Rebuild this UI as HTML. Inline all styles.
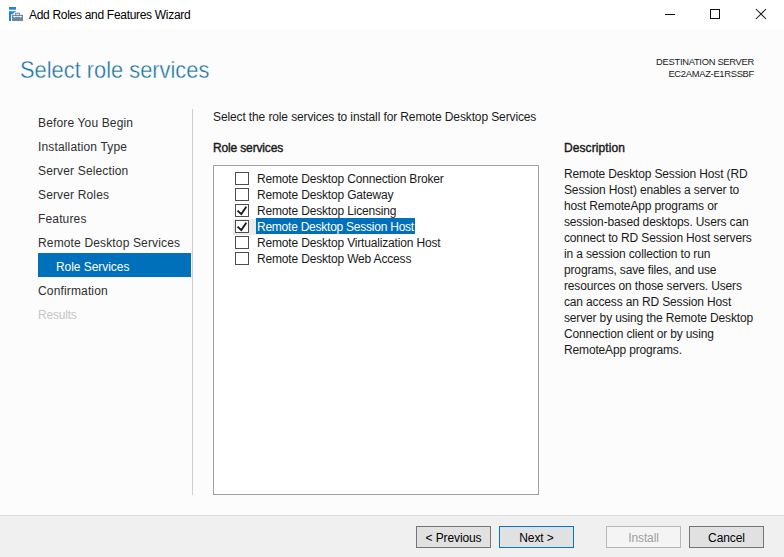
<!DOCTYPE html>
<html><head><meta charset="utf-8">
<style>
html,body{margin:0;padding:0;}
body{width:784px;height:557px;position:relative;overflow:hidden;background:#fcfcfc;font-family:"Liberation Sans",sans-serif;font-size:12px;color:#1a1a1a;}
.a{position:absolute;white-space:nowrap;line-height:16px;}
#title{position:absolute;left:0;top:0;width:784px;height:30px;background:#fff;}
#footer{position:absolute;left:0;top:515px;width:784px;height:42px;background:#f0f0f0;border-top:1px solid #dcdcdc;}
.nav{left:38px;letter-spacing:0.15px;color:#2e2e2e;}
.btn{position:absolute;top:526px;width:73px;height:20px;border:1px solid #757575;background:#e1e1e1;text-align:center;line-height:22px;color:#000;letter-spacing:-0.1px;}
.cb{position:absolute;left:235px;width:12px;height:11px;border:1px solid #4d4d4d;background:#fff;}
.li{left:257px;letter-spacing:-0.17px;}
</style></head><body>
<div id="title"></div>
<svg style="position:absolute;left:0;top:0" width="30" height="30" viewBox="0 0 30 30">
  <rect x="9" y="7" width="7" height="2.7" fill="#1f84dc"/>
  <polygon points="9,11.2 16,11.2 16,11.8 12.8,13.8 11.6,15 11,16.4 11,21 9,21" fill="#1f84dc"/>
  <rect x="11.3" y="14.2" width="12.3" height="7" fill="#fff"/><rect x="14.3" y="12.2" width="6.4" height="3" fill="#fff"/>
  <path d="M15,14.8 V13.5 Q15,12.8 15.8,12.8 H19.2 Q20,12.8 20,13.5 V14.8 H18.8 V13.8 H16.2 V14.8 Z" fill="#6a8aa3"/>
  <rect x="12" y="14.8" width="11" height="6.2" fill="#6a8aa3"/>
  <path d="M13,15.9 H22 V16.7 H21 L20.3,18 L19.6,16.7 H15.4 L14.7,18 L14,16.7 H13 Z" fill="#fff"/>
</svg>
<div class="a" style="left:29px;top:7px;letter-spacing:-0.3px;color:#000">Add Roles and Features Wizard</div>
<!-- window controls -->
<div style="position:absolute;left:665px;top:14px;width:10px;height:1px;background:#111"></div>
<div style="position:absolute;left:710px;top:9px;width:8px;height:8px;border:1px solid #111"></div>
<svg style="position:absolute;left:750px;top:4px" width="22" height="22" viewBox="0 0 22 22">
  <path d="M6,5 L16,15 M16,5 L6,15" stroke="#111" stroke-width="1.05"/>
</svg>

<div class="a" style="left:20px;top:55px;font-size:24px;line-height:30px;color:#1b74a2;transform:scaleX(0.91);transform-origin:0 0;-webkit-text-stroke:0.35px #fcfcfc">Select role services</div>
<div class="a" style="left:600px;width:154px;top:55.5px;font-size:9.4px;line-height:12.6px;text-align:right;color:#1a1a1a;letter-spacing:-0.3px">DESTINATION SERVER<br>EC2AMAZ-E1RSSBF</div>

<!-- nav -->
<div class="a nav" style="top:115px">Before You Begin</div>
<div class="a nav" style="top:139px">Installation Type</div>
<div class="a nav" style="top:163px">Server Selection</div>
<div class="a nav" style="top:187px">Server Roles</div>
<div class="a nav" style="top:211px">Features</div>
<div class="a nav" style="top:235px">Remote Desktop Services</div>
<div style="position:absolute;left:38px;top:253px;width:153px;height:24px;background:#0070bb"></div>
<div class="a nav" style="top:259px;left:56px;color:#fff;letter-spacing:-0.05px">Role Services</div>
<div class="a nav" style="top:283px">Confirmation</div>
<div class="a nav" style="top:307px;color:#c6c6c6;letter-spacing:-0.2px">Results</div>
<div style="position:absolute;left:192px;top:109px;width:1px;height:386px;background:#cfcfcf"></div>

<div class="a" style="left:213px;top:109px;letter-spacing:-0.12px">Select the role services to install for Remote Desktop Services</div>
<div class="a" style="left:213px;top:140px;letter-spacing:-0.15px;-webkit-text-stroke:0.4px #1a1a1a">Role services</div>

<!-- listbox -->
<div style="position:absolute;left:213px;top:165px;width:324px;height:328px;border:1px solid #a2a2a2;background:#fff"></div>
<div style="position:absolute;left:233px;top:219px;width:23px;height:16px;background:#ececec"></div>
<div style="position:absolute;left:256px;top:218px;width:159px;height:16px;background:#0070bb"></div>
<div class="cb" style="top:172px"></div>
<div class="cb" style="top:188px"></div>
<div class="cb" style="top:204px"></div>
<div class="cb" style="top:220px"></div>
<div class="cb" style="top:236px"></div>
<div class="cb" style="top:252px"></div>
<svg style="position:absolute;left:235px;top:204px" width="14" height="32" viewBox="0 0 14 32">
  <path d="M2.5,6.6 L6.3,10.1 L11.3,2.8" fill="none" stroke="#1a1a1a" stroke-width="1.9"/>
  <path d="M2.5,22.6 L6.3,26.1 L11.3,18.8" fill="none" stroke="#1a1a1a" stroke-width="1.9"/>
</svg>
<div class="a li" style="top:171px">Remote Desktop Connection Broker</div>
<div class="a li" style="top:187px">Remote Desktop Gateway</div>
<div class="a li" style="top:203px">Remote Desktop Licensing</div>
<div class="a li" style="top:219px;color:#fff;letter-spacing:-0.24px">Remote Desktop Session Host</div>
<div class="a li" style="top:235px">Remote Desktop Virtualization Host</div>
<div class="a li" style="top:251px">Remote Desktop Web Access</div>

<!-- description -->
<div class="a" style="left:564px;top:140px;letter-spacing:0.08px;-webkit-text-stroke:0.4px #1a1a1a">Description</div>
<div class="a" style="left:564px;top:166px;letter-spacing:-0.15px">Remote Desktop Session Host (RD<br>Session Host) enables a server to<br>host RemoteApp programs or<br>session-based desktops. Users can<br>connect to RD Session Host servers<br>in a session collection to run<br>programs, save files, and use<br>resources on those servers. Users<br>can access an RD Session Host<br>server by using the Remote Desktop<br>Connection client or by using<br>RemoteApp programs.</div>

<div id="footer"></div>
<div class="btn" style="left:416px">&lt; Previous</div>
<div class="btn" style="left:499px;border-color:#0078d7">Next &gt;</div>
<div class="btn" style="left:606px;border-color:#b4b8bb;background:#f4f4f4;color:#a0a0a0">Install</div>
<div class="btn" style="left:689px">Cancel</div>
</body></html>
